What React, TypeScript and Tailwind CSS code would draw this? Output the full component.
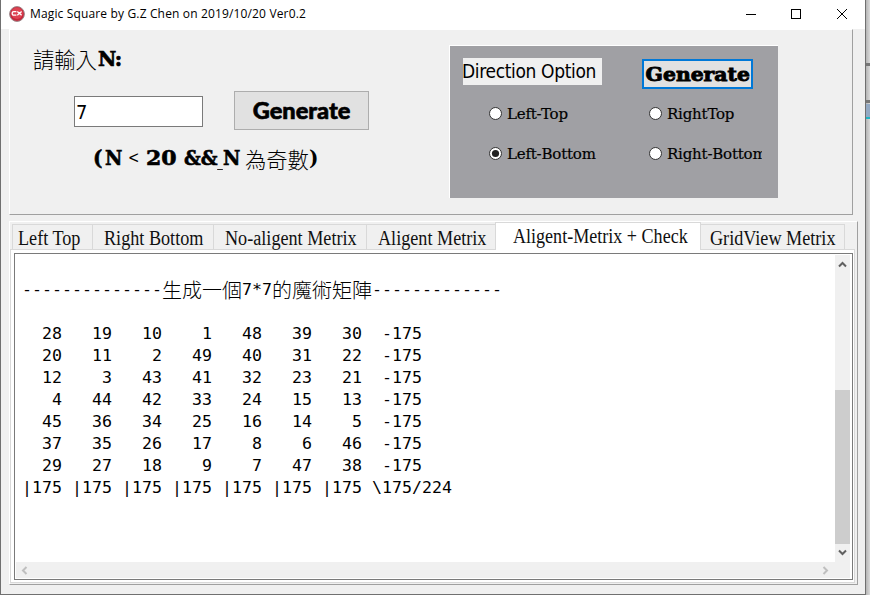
import React from "react";

const rows: number[][] = [
  [28, 19, 10, 1, 48, 39, 30],
  [20, 11, 2, 49, 40, 31, 22],
  [12, 3, 43, 41, 32, 23, 21],
  [4, 44, 42, 33, 24, 15, 13],
  [45, 36, 34, 25, 16, 14, 5],
  [37, 35, 26, 17, 8, 6, 46],
  [29, 27, 18, 9, 7, 47, 38],
];

const matrix = rows
  .map((r) => r.map((n, i) => String(n).padStart(i === 0 ? 4 : 5)).join("") + "  -175")
  .concat("|175 ".repeat(7) + "\\175/224")
  .join("\n");

function TitleBar() {
  return (
    <header className="flex h-[29px] shrink-0 items-center bg-white pl-2">
      <svg width="16" height="16" viewBox="0 0 16 16" className="mt-[-1px]">
        <circle cx="8" cy="8" r="7.4" fill="#c9253a" stroke="#9a8a8c" strokeWidth="1" />
        <circle cx="8" cy="7.2" r="5.8" fill="#dd4352" />
        <path d="M7.4 5.6H4.9Q3.2 5.6 3.2 7.4T4.9 9.2H7.4M8.3 5.6L12.6 9.2M12.6 5.6L8.3 9.2" fill="none" stroke="#fff" strokeWidth="1.3" />
      </svg>
      <span className="ml-[5px] mt-[-1px] whitespace-nowrap font-['Open_Sans','Noto_Sans',sans-serif] text-[12px] tracking-[0.15px] text-black">
        Magic Square by G.Z Chen on 2019/10/20 Ver0.2
      </span>
      <svg className="mb-[2px] ml-auto mr-[16px]" width="104" height="12" viewBox="0 0 104 12" fill="none" stroke="#000" shapeRendering="crispEdges">
        <path d="M1 6.5H11" />
        <rect x="46.5" y="1.5" width="9" height="9" />
        <path d="M92 1L102 11M102 1L92 11" shapeRendering="auto" />
      </svg>
    </header>
  );
}

function Radio({ label, checked }: { label: string; checked?: boolean }) {
  return (
    <div className="flex h-5 w-[113px] items-center">
      <svg width="14" height="14" viewBox="0 0 14 14" className="shrink-0">
        <circle cx="6.5" cy="6.5" r="6" fill="#fff" stroke="#333" />
        {checked && <circle cx="6.5" cy="6.5" r="3.6" fill="#222" />}
      </svg>
      <span className="ml-1 w-[255px] overflow-hidden whitespace-nowrap font-['DejaVu_Serif',serif] text-[15px] tracking-[-0.2px] text-black [-webkit-text-stroke:0.2px_#000]">
        {label}
      </span>
    </div>
  );
}

function DirectionPanel() {
  return (
    <section className="ml-[79px] mt-[15px] h-[153px] w-[329px] border-l border-t border-white bg-[#a0a0a4]">
      <div className="flex items-start">
        <div className="ml-[13px] mt-[12px] h-[27px] w-[139px] whitespace-nowrap bg-[#f0f0f0] font-['DejaVu_Sans_Condensed','DejaVu_Sans',sans-serif] text-[19px] leading-[26px] tracking-[-0.35px] text-black">
          <span className="-ml-px">Direction Option</span>
        </div>
        <button className="ml-[40px] mt-[13px] flex h-[30px] w-[111px] items-center justify-center border-2 border-[#0078d7] bg-[#e1e1e1] font-['DejaVu_Serif',serif] text-[19px] font-bold text-black">
          <span className="mt-px scale-x-[1.07] [-webkit-text-stroke:0.9px_#000]">Generate</span>
        </button>
      </div>
      <div className="ml-[39px] mt-[15px] grid grid-cols-[160px_113px] gap-y-5">
        <Radio label="Left-Top" />
        <Radio label="RightTop" />
        <Radio label="Left-Bottom" checked />
        <Radio label="Right-Bottom" />
      </div>
    </section>
  );
}

function InputPanel() {
  return (
    <section className="ml-2 flex h-[186px] w-[844px] shrink-0 border border-b-[#a0a0a0] border-l-white border-r-[#a0a0a0] border-t-white">
      <div className="w-[360px] text-[20px] text-black">
        <div className="ml-[23px] mt-[15px] flex h-7 items-center whitespace-nowrap">
          <span className="font-['Noto_Sans_CJK_TC',sans-serif] text-[21.3px] font-light">請輸入</span>
          <span className="ml-[1px] font-['DejaVu_Serif',serif] font-bold tracking-[-0.6px] [-webkit-text-stroke:0.7px_#000]">N:</span>
        </div>
        <div className="ml-[64px] mt-[18px] flex">
          <input className="mt-[5px] h-[31px] w-[129px] border border-[#7a7a7a] bg-white px-px font-['DejaVu_Sans_Condensed','DejaVu_Sans',sans-serif] text-[20px]" defaultValue="7" />
          <button className="ml-[31px] flex h-[39px] w-[135px] items-center justify-center border border-[#adadad] bg-[#e1e1e1] font-['Lato',sans-serif] text-[22px] font-black">
            <span className="scale-x-[1.07] [-webkit-text-stroke:0.6px_#000]">Generate</span>
          </button>
        </div>
        <div className="ml-[83px] mt-[14px] flex h-7 items-center whitespace-pre font-['DejaVu_Serif',serif] font-bold">
          <span className="w-[12px] [-webkit-text-stroke:0.5px_#000]">(</span>
          <span className="w-[23px] origin-left scale-x-[0.95] [-webkit-text-stroke:0.6px_#000]">N</span>
          <span className="w-[18px] origin-left scale-x-[0.8] text-[17px] font-normal">&lt;</span>
          <span className="w-[38px] origin-left scale-x-[1.1] [-webkit-text-stroke:0.6px_#000]">20</span>
          <span className="w-[33px] origin-left scale-x-[0.93] [-webkit-text-stroke:0.6px_#000]">&amp;&amp;</span>
          <span className="w-[6px] origin-left scale-x-[0.6] font-normal">_</span>
          <span className="w-[22px] origin-left scale-x-[0.95] [-webkit-text-stroke:0.6px_#000]">N</span>
          <span className="mt-px w-[64px] font-['Noto_Sans_CJK_TC',sans-serif] text-[21.3px] font-light">為奇數</span>
          <span>)</span>
        </div>
      </div>
      <DirectionPanel />
    </section>
  );
}

const tabs = [
  { label: "Left Top", box: "w-[81px] pl-[5px]" },
  { label: "Right Bottom", box: "w-[122px] pl-[11px]" },
  { label: "No-aligent Metrix", box: "w-[154px] pl-[11px]" },
  { label: "Aligent Metrix", box: "w-[130px] pl-[11px]" },
  { label: "Aligent-Metrix + Check", box: "w-[206px] pl-[17px]", active: true },
  { label: "GridView Metrix", box: "w-[145px] pl-[9px]" },
];

function Chevron({ d, color }: { d: string; color: string }) {
  return (
    <svg width="9" height="9" viewBox="0 0 9 9" fill="none" stroke={color} strokeWidth="2">
      <path d={d} />
    </svg>
  );
}

function Output() {
  return (
    <div className="flex h-[327px] w-[839px] flex-col border border-[#7a7a7a] bg-white p-px">
      <div className="flex h-[307px]">
        <div className="flex-1 overflow-hidden pl-[6px] font-['DejaVu_Sans_Mono',monospace] text-[16.61px] leading-[22px] text-black">
          <div className="mt-[24px] flex h-[22px] items-center whitespace-pre">
            <span>{"-".repeat(14)}</span>
            <span className="font-['Noto_Sans_CJK_TC',sans-serif] text-[20px] font-light">生成一個</span>
            <span>7*7</span>
            <span className="font-['Noto_Sans_CJK_TC',sans-serif] text-[20px] font-light">的魔術矩陣</span>
            <span>{"-".repeat(13)}</span>
          </div>
          <pre className="mt-[22px] font-['DejaVu_Sans_Mono',monospace]">{matrix}</pre>
        </div>
        <div className="mr-px flex w-[15px] flex-col items-center bg-[#f0f0f0] pt-[5px]">
          <Chevron d="M1 6.5L4.5 3L8 6.5" color="#606060" />
          <div className="mt-[121px] h-[154px] w-full bg-[#cdcdcd]" />
          <div className="mt-[4px]">
            <Chevron d="M1 2.5L4.5 6L8 2.5" color="#606060" />
          </div>
        </div>
      </div>
      <div className="mr-px flex h-[16px] items-center justify-between bg-[#f0f0f0] pl-[4px] pr-[20px]">
        <Chevron d="M6.5 1L3 4.5L6.5 8" color="#bfbfbf" />
        <Chevron d="M2.5 1L6 4.5L2.5 8" color="#bfbfbf" />
      </div>
    </div>
  );
}

function TabGroup() {
  return (
    <section className="ml-2 mt-[6px] flex h-[364px] w-[849px] shrink-0 flex-col border border-b-[#a0a0a0] border-l-white border-r-[#a0a0a0] border-t-white">
      <nav className="ml-[2px] flex h-[27px] items-end font-['Liberation_Serif',serif] text-[20px] text-[#101010]">
        {tabs.map((t) =>
          t.active ? (
            <div key={t.label} className={"relative -mb-px -ml-px flex h-[28px] items-center whitespace-nowrap border border-b-0 border-[#d9d9d9] bg-white pb-px " + t.box}>
              <span className="origin-left scale-x-[0.903]">{t.label}</span>
            </div>
          ) : (
            <div key={t.label} className={"-ml-px flex h-[25px] items-center whitespace-nowrap border border-b-0 border-[#d9d9d9] bg-[#f0f0f0] pt-px first:ml-0 " + t.box}>
              <span className="origin-left scale-x-[0.908]">{t.label}</span>
            </div>
          ),
        )}
      </nav>
      <div className="h-[334px] w-[845px] border border-[#d9d9d9] bg-white pl-[3px] pt-[3px]">
        <Output />
      </div>
    </section>
  );
}

export default function App() {
  return (
    <div className="flex h-[595px] w-[870px] overflow-hidden bg-[#d0d0d0]">
      <main className="flex h-[595px] w-[866px] shrink-0 flex-col border-x border-b border-[#707070] bg-[#f0f0f0]">
        <TitleBar />
        <InputPanel />
        <TabGroup />
      </main>
      <aside className="flex w-1 flex-col bg-gradient-to-r from-[#b5b5b5] to-[#dadada]">
        <div className="h-[29px]" />
        <div className="mt-[34px] h-[3px] bg-[#777]" />
        <div className="mt-[34px] h-[3px] bg-[#777]" />
        <div className="mt-px h-[13px] bg-[#93a9c3]" />
        <div className="h-[2px] bg-[#20b5c4]" />
      </aside>
    </div>
  );
}
